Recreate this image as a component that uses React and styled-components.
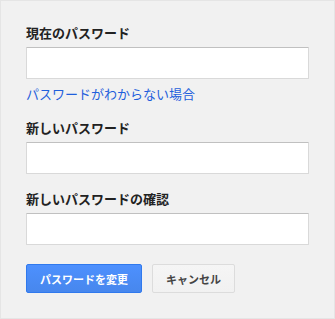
import React from "react";
import styled, { createGlobalStyle } from "styled-components";

const GlobalStyle = createGlobalStyle`
  html, body {
    margin: 0;
    padding: 0;
    background: #ffffff;
  }
  body {
    font-family: "Noto Sans CJK JP", "Liberation Sans", sans-serif;
  }
`;

const Panel = styled.div`
  box-sizing: border-box;
  width: 335px;
  height: 319px;
  border: 1px solid #e5e5e5;
  background: #f1f1f1;
  padding: 23px 0 0 25px;
`;

const Form = styled.form`
  display: flex;
  flex-direction: column;
  gap: 16px;
  margin: 0;
`;

const Field = styled.div`
  display: flex;
  flex-direction: column;
`;

const Label = styled.label`
  font-size: 13px;
  line-height: 17px;
  font-weight: bold;
  color: #222222;
  margin-bottom: 6px;
`;

const Input = styled.input`
  box-sizing: border-box;
  width: 283px;
  height: 32px;
  margin: 0;
  padding: 0 8px;
  background: #ffffff;
  border: 1px solid #d9d9d9;
  border-top-color: #c0c0c0;
  border-radius: 1px;
  outline: none;
`;

const HelpLink = styled.a`
  margin-top: 5px;
  font-size: 13px;
  line-height: 19px;
  color: #1f5fdc;
  text-decoration: none;
  align-self: flex-start;
`;

const Actions = styled.div`
  display: flex;
  gap: 10px;
  margin-top: 3px;
`;

const Button = styled.button`
  box-sizing: border-box;
  height: 29px;
  padding: 0 13px;
  margin: 0;
  font-family: inherit;
  font-size: 11px;
  font-weight: bold;
  border-radius: 2px;
  cursor: pointer;
  color: ${({ $primary }) => ($primary ? "#ffffff" : "#444444")};
  background: ${({ $primary }) =>
    $primary
      ? "linear-gradient(#4d90fe, #4787ed)"
      : "linear-gradient(#f5f5f5, #f1f1f1)"};
  border: 1px solid ${({ $primary }) => ($primary ? "#3079ed" : "#dcdcdc")};
`;

export default function App() {
  return (
    <>
      <GlobalStyle />
      <Panel>
        <Form onSubmit={(e) => e.preventDefault()}>
          <Field>
            <Label>現在のパスワード</Label>
            <Input type="password" />
            <HelpLink href="#">パスワードがわからない場合</HelpLink>
          </Field>
          <Field>
            <Label>新しいパスワード</Label>
            <Input type="password" />
          </Field>
          <Field>
            <Label>新しいパスワードの確認</Label>
            <Input type="password" />
          </Field>
          <Actions>
            <Button type="submit" $primary>
              パスワードを変更
            </Button>
            <Button type="button">キャンセル</Button>
          </Actions>
        </Form>
      </Panel>
    </>
  );
}
